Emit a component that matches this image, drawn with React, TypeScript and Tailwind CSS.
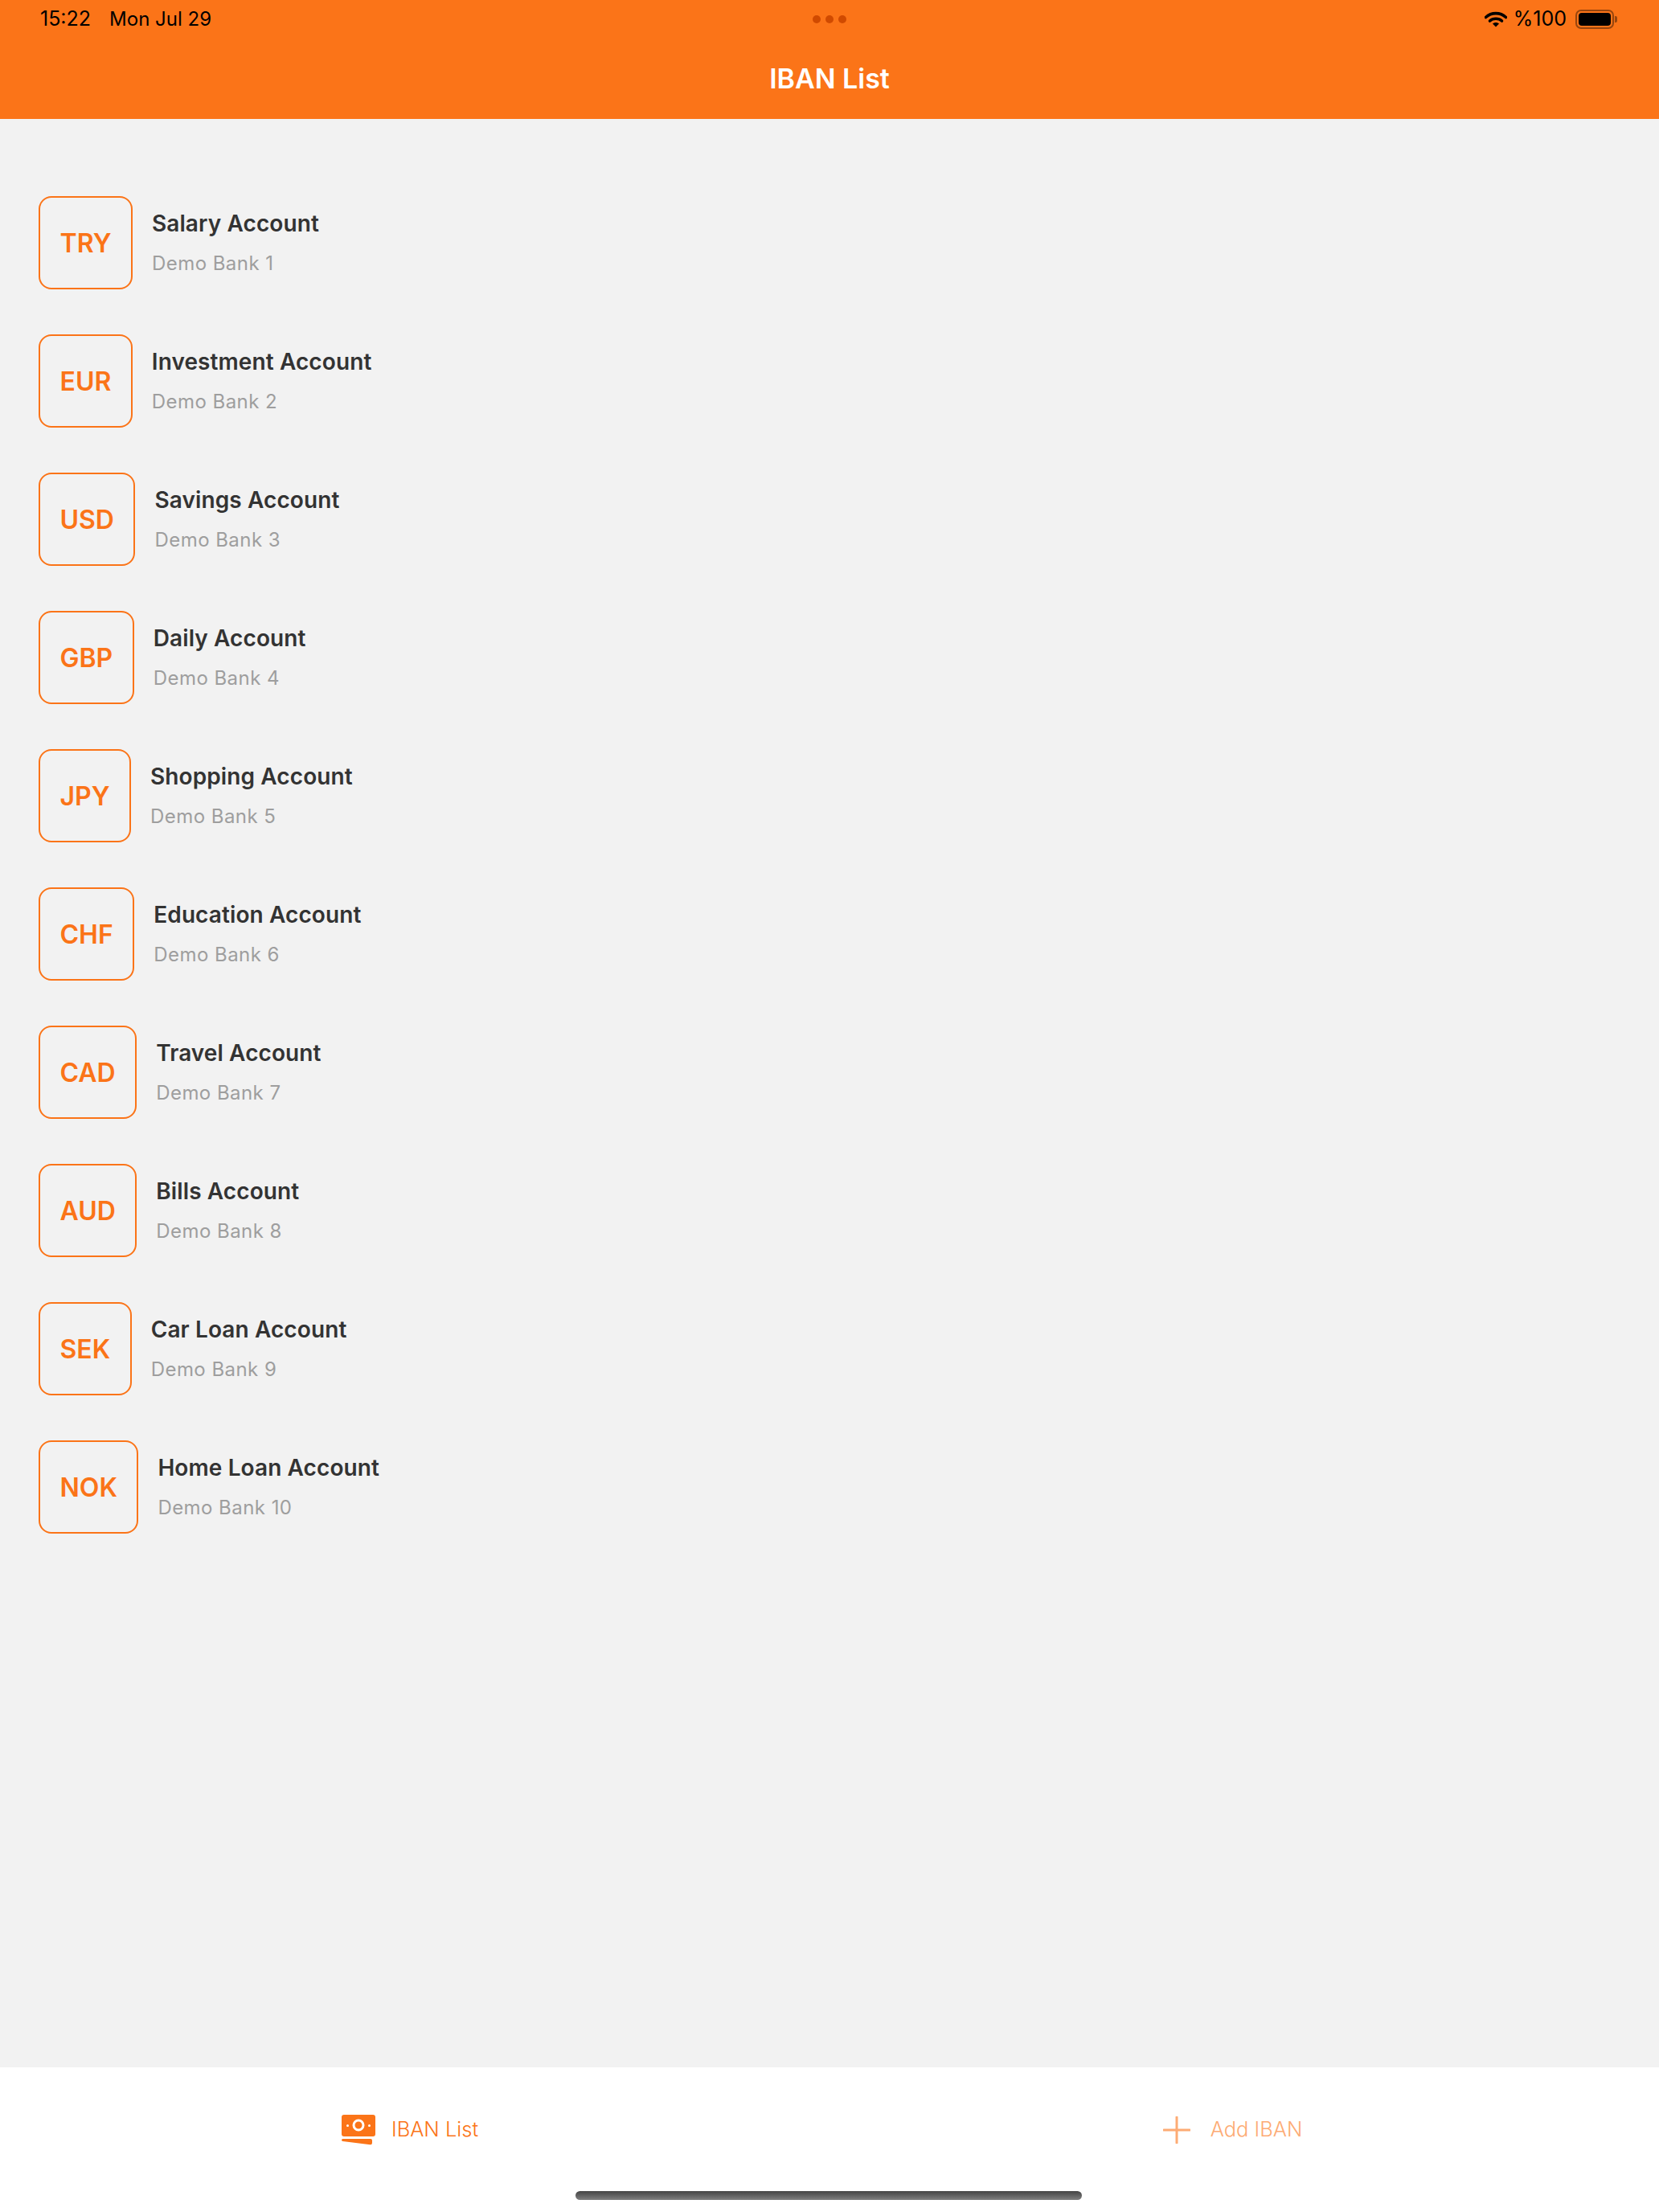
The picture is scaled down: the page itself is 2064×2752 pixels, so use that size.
const accounts = [
  { code: "TRY", title: "Salary Account", bank: "Demo Bank 1" },
  { code: "EUR", title: "Investment Account", bank: "Demo Bank 2" },
  { code: "USD", title: "Savings Account", bank: "Demo Bank 3" },
  { code: "GBP", title: "Daily Account", bank: "Demo Bank 4" },
  { code: "JPY", title: "Shopping Account", bank: "Demo Bank 5" },
  { code: "CHF", title: "Education Account", bank: "Demo Bank 6" },
  { code: "CAD", title: "Travel Account", bank: "Demo Bank 7" },
  { code: "AUD", title: "Bills Account", bank: "Demo Bank 8" },
  { code: "SEK", title: "Car Loan Account", bank: "Demo Bank 9" },
  { code: "NOK", title: "Home Loan Account", bank: "Demo Bank 10" },
];

function WifiIcon() {
  return (
    <svg width="28" height="20" viewBox="0 0 28 20" fill="none">
      <path d="M1.5 7.5C8.5 1 19.5 1 26.5 7.5" stroke="#000" strokeWidth="3.6" strokeLinecap="round" />
      <path d="M6.5 12C10.5 8.4 17.5 8.4 21.5 12" stroke="#000" strokeWidth="3.6" strokeLinecap="round" />
      <path d="M10 15.6C12.4 13.6 15.6 13.6 18 15.6L14 19.6Z" fill="#000" />
    </svg>
  );
}

function BatteryIcon() {
  return (
    <div className="flex items-center">
      <div className="flex h-[24px] w-[48px] items-center justify-center rounded-[7px] border-2 border-black/40 p-[2px]">
        <div className="h-full w-full rounded-[4px] bg-black" />
      </div>
      <div className="ml-[1px] h-[8px] w-[3px] rounded-r-[2px] bg-black/40" />
    </div>
  );
}

function MoneyIcon() {
  return (
    <svg width="42" height="38" viewBox="0 0 42 38">
      <rect x="0" y="0" width="42" height="27" rx="3" fill="#fb7418" />
      <circle cx="21" cy="13" r="6" fill="none" stroke="#fff" strokeWidth="3" />
      <circle cx="7.5" cy="13.5" r="1.5" fill="#fff" />
      <circle cx="34.5" cy="13.5" r="1.5" fill="#fff" />
      <path d="M1.5 30 L36 30 Q38 30 38 32 L38 35 Q38 37.5 35.5 37.2 L1.5 33 Q0 32.8 0 31.5 Q0 30 1.5 30 Z" fill="#fb7418" />
    </svg>
  );
}

function PlusIcon() {
  return (
    <svg width="34" height="34" viewBox="0 0 34 34" fill="none">
      <path d="M17 1V33M1 17H33" stroke="#fdab74" strokeWidth="3" strokeLinecap="round" />
    </svg>
  );
}

export default function App() {
  return (
    <div className="flex h-[2752px] w-[2064px] flex-col overflow-hidden bg-[#f2f2f2] font-['Inter',sans-serif]">
      {/* Header */}
      <header className="relative h-[148px] shrink-0 bg-[#fb7418]">
        <div className="flex h-[48px] items-center justify-between pl-[50px] pr-[52px] text-black">
          <div className="flex items-baseline gap-[23px]">
            <span className="text-[25px]">15:22</span>
            <span className="text-[24px]">Mon Jul 29</span>
          </div>
          <div className="flex items-center text-[25px]">
            <WifiIcon />
            <span className="ml-[8px]">%100</span>
            <span className="ml-[11px]">
              <BatteryIcon />
            </span>
          </div>
        </div>
        <div className="absolute left-[1011px] top-[19px] flex gap-[6px]">
          <span className="h-[10px] w-[10px] rounded-full bg-[#d04a00]" />
          <span className="h-[10px] w-[10px] rounded-full bg-[#d04a00]" />
          <span className="h-[10px] w-[10px] rounded-full bg-[#d04a00]" />
        </div>
        <h1 className="mt-[29px] text-center text-[34px] font-semibold leading-[42px] text-white">IBAN List</h1>
      </header>

      {/* Account list */}
      <main className="flex flex-1 flex-col gap-[56px] pl-[48px] pt-[96px]">
        {accounts.map((a) => (
          <div key={a.code} className="flex h-[116px] items-center gap-[24px]">
            <div className="flex h-[116px] items-center justify-center rounded-[16px] border-2 border-[#fb7418] px-[24.5px] pt-[2px] text-[32px] font-semibold text-[#fb7418]">
              {a.code}
            </div>
            <div className="flex flex-col">
              <span className="text-[28px] font-semibold leading-[36px] tracking-[0.1px] text-[#333333]">{a.title}</span>
              <span className="mt-[16px] text-[24px] leading-[32px] tracking-[0.45px] text-[#9e9e9e]">{a.bank}</span>
            </div>
          </div>
        ))}
      </main>

      {/* Tab bar */}
      <footer className="relative h-[180px] shrink-0 bg-white">
        <div className="grid grid-cols-2 pt-[58px]">
          <div className="flex items-center justify-center gap-[20px] pr-[12px] text-[25.5px] font-light text-[#fb7418]">
            <MoneyIcon />
            <span className="pb-[2px]">IBAN List</span>
          </div>
          <div className="flex items-center justify-center gap-[25px] pr-[29px] text-[25.5px] font-light text-[#fdab74]">
            <PlusIcon />
            <span className="pb-[2px]">Add IBAN</span>
          </div>
        </div>
        <div className="absolute left-[716px] top-[154px] h-[11px] w-[630px] rounded-full bg-gradient-to-b from-[#444444] to-[#808080]" />
      </footer>
    </div>
  );
}
